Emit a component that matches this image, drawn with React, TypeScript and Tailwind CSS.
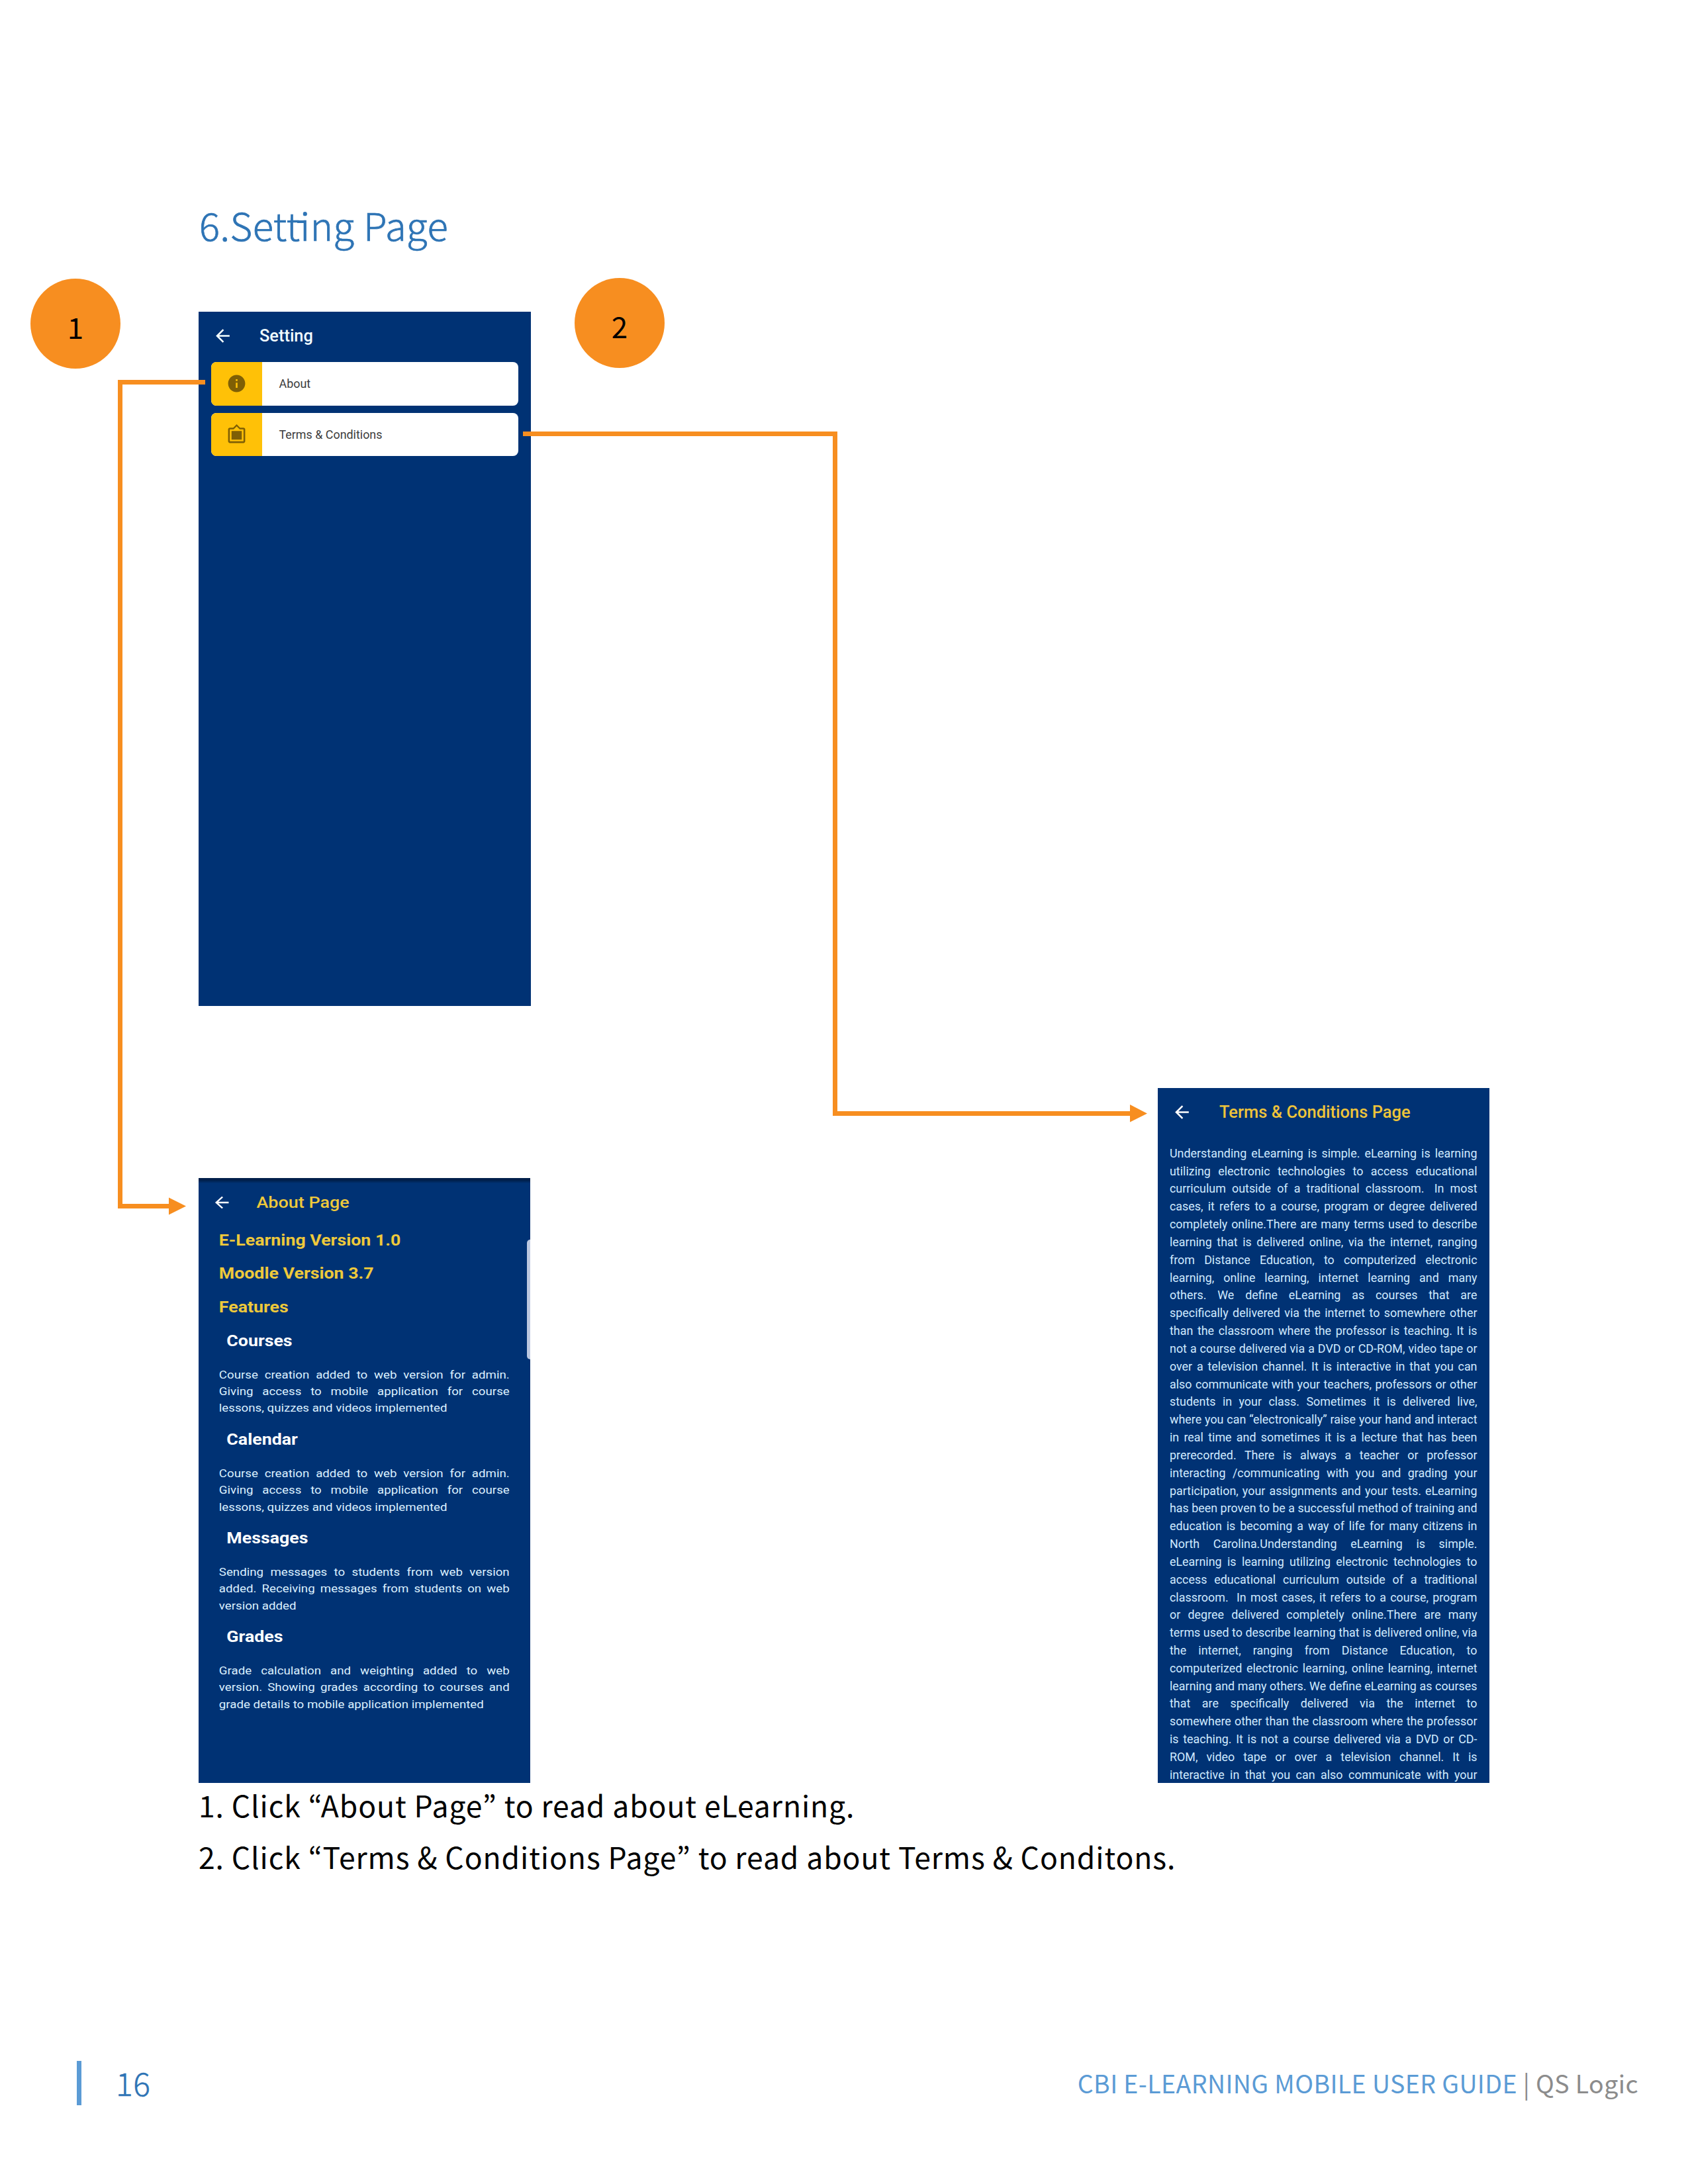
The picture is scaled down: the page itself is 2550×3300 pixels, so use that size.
import { MdArrowBack, MdFilterFrames, MdInfo } from "react-icons/md";

const TERMS_LINES = [
  "Understanding eLearning is simple. eLearning is learning",
  "utilizing electronic technologies to access educational",
  "curriculum outside of a traditional classroom.\u2004 In most",
  "cases, it refers to a course, program or degree delivered",
  "completely online.There are many terms used to describe",
  "learning that is delivered online, via the internet, ranging",
  "from Distance Education, to computerized electronic",
  "learning, online learning, internet learning and many",
  "others. We define eLearning as courses that are",
  "specifically delivered via the internet to somewhere other",
  "than the classroom where the professor is teaching. It is",
  "not a course delivered via a DVD or CD-ROM, video tape or",
  "over a television channel. It is interactive in that you can",
  "also communicate with your teachers, professors or other",
  "students in your class. Sometimes it is delivered live,",
  "where you can “electronically” raise your hand and interact",
  "in real time and sometimes it is a lecture that has been",
  "prerecorded. There is always a teacher or professor",
  "interacting /communicating with you and grading your",
  "participation, your assignments and your tests. eLearning",
  "has been proven to be a successful method of training and",
  "education is becoming a way of life for many citizens in",
  "North Carolina.Understanding eLearning is simple.",
  "eLearning is learning utilizing electronic technologies to",
  "access educational curriculum outside of a traditional",
  "classroom.\u2004 In most cases, it refers to a course, program",
  "or degree delivered completely online.There are many",
  "terms used to describe learning that is delivered online, via",
  "the internet, ranging from Distance Education, to",
  "computerized electronic learning, online learning, internet",
  "learning and many others. We define eLearning as courses",
  "that are specifically delivered via the internet to",
  "somewhere other than the classroom where the professor",
  "is teaching. It is not a course delivered via a DVD or CD-",
  "ROM, video tape or over a television channel. It is",
  "interactive in that you can also communicate with your",
];

const FEATURES = [
  {
    title: "Courses",
    lines: [
      "Course creation added to web version for admin.",
      "Giving access to mobile application for course",
      "lessons, quizzes and videos implemented",
    ],
  },
  {
    title: "Calendar",
    lines: [
      "Course creation added to web version for admin.",
      "Giving access to mobile application for course",
      "lessons, quizzes and videos implemented",
    ],
  },
  {
    title: "Messages",
    lines: [
      "Sending messages to students from web version",
      "added. Receiving messages from students on web",
      "version added",
    ],
  },
  {
    title: "Grades",
    lines: [
      "Grade calculation and weighting added to web",
      "version. Showing grades according to courses and",
      "grade details to mobile application implemented",
    ],
  },
];

function SettingRow({ icon, label }: { icon: React.ReactNode; label: string }) {
  return (
    <div className="flex h-[65.5px] overflow-hidden rounded-[8px] bg-white">
      <div className="flex w-[77px] items-center justify-center bg-[#ffc107] text-[#7f5f05]">{icon}</div>
      <div className="flex items-center pl-[26px] pt-[2px] text-[17.9px] text-[#3c3c3c]">{label}</div>
    </div>
  );
}

function SettingScreen() {
  return (
    <section className="h-[1049px] w-[502px] bg-[#003274]">
      <header className="flex h-[76px] items-center pb-[4px] pl-[21px]">
        <MdArrowBack className="size-[31px] text-[#f4ffff]" />
        <h2 className="pl-[40px] text-[25.4px] font-medium text-[#f0fbff]">Setting</h2>
      </header>
      <div className="flex flex-col gap-[11px] pl-[18.5px] pr-[19px]">
        <SettingRow icon={<MdInfo className="size-[31px]" />} label="About" />
        <SettingRow icon={<MdFilterFrames className="size-[31px]" />} label="Terms & Conditions" />
      </div>
    </section>
  );
}

function AboutScreen() {
  return (
    <section className="relative h-[914px] w-[501px] overflow-hidden bg-[#003274]">
      <div className="absolute inset-x-0 top-0 h-[8px] bg-linear-to-b from-[#001f4a] from-40% to-[#003274]" />
      <div className="absolute right-0 top-[93px] h-[181px] w-[5px] rounded-l-[5px] bg-[#bcc8e0]" />
      <div className="w-[455px] origin-left scale-x-110">
        <header className="flex h-[68.6px] items-center pl-[17.5px] pt-[6px]">
          <MdArrowBack className="size-[28px] text-white" />
          <h2 className="pl-[34px] text-[24.5px] font-medium text-[#eec93b]">About Page</h2>
        </header>
        <div className="pl-[28px] text-[24.3px] font-bold leading-[50.8px] text-[#eec93b]">
          <p>E-Learning Version 1.0</p>
          <p>Moodle Version 3.7</p>
          <p>Features</p>
        </div>
        <div className="flex flex-col gap-[9.3px] pl-[28px] pr-[28px]">
          {FEATURES.map((feature) => (
            <div key={feature.title}>
              <h3 className="pl-[10.5px] text-[24.3px] font-bold leading-[50.8px] text-white">{feature.title}</h3>
              <div className="pt-[12.8px] text-[17px] leading-[25.4px] text-[#dcf0ff]">
                {feature.lines.map((line, i) => (
                  <p key={i} className={i < 2 ? "whitespace-nowrap [text-align-last:justify]" : "whitespace-nowrap"}>
                    {line}
                  </p>
                ))}
              </div>
            </div>
          ))}
        </div>
      </div>
    </section>
  );
}

function TermsScreen() {
  return (
    <section className="h-[1050px] w-[501px] overflow-hidden bg-[#003274]">
      <header className="flex h-[85.8px] items-center pb-[13.8px] pl-[21px]">
        <MdArrowBack className="size-[31px] text-white" />
        <h2 className="pl-[41px] text-[25.5px] font-medium text-[#eec43a]">Terms &amp; Conditions Page</h2>
      </header>
      <div className="pl-[18px] pr-[18.5px] text-[17.9px] leading-[26.83px] text-[#d0eaff]">
        {TERMS_LINES.map((line, i) => (
          <p key={i} className="whitespace-nowrap [text-align-last:justify]">
            {line}
          </p>
        ))}
      </div>
    </section>
  );
}

function Connectors() {
  return (
    <svg className="pointer-events-none absolute left-0 top-0" width="2550" height="3300" viewBox="0 0 2550 3300">
      <g fill="none" stroke="#f78e20" strokeWidth="7">
        <path d="M310 577.5H181.500V1822.500H256" />
        <path d="M790 655.500H1261.500V1682.500H1708" />
      </g>
      <g fill="#f78e20">
        <path d="M255 1809.500L281 1822.500L255 1835.500Z" />
        <path d="M1707 1669L1733 1682.500L1707 1695.500Z" />
      </g>
    </svg>
  );
}

export default function App() {
  return (
    <div className="relative h-[3300px] w-[2550px] overflow-hidden bg-white font-['Noto_Sans_CJK_KR',sans-serif]">
      <div className="pl-[300px] pr-[300px] pt-[289px]">
        <h1 className="h-[182px] pl-px text-[58px] font-light leading-[100px] tracking-[0.5px] text-[#2e74b5] [-webkit-text-stroke:0.7px_#2e74b5]">
          6.Sett
          <span className="relative">
            i
            <span className="absolute left-[-4px] top-[36px] h-[4px] w-[11px] bg-[#2e74b5]" />
          </span>
          ng Page
        </h1>
        <div className="flex h-[2223px] items-end justify-between font-[Roboto,sans-serif]">
          <div className="flex h-full flex-col justify-between">
            <SettingScreen />
            <AboutScreen />
          </div>
          <TermsScreen />
        </div>
        <div className="flex flex-col gap-[13px] whitespace-nowrap text-[44.5px] leading-[65px] tracking-[0.9px] text-black">
          <p>1. Click “About Page” to read about eLearning.</p>
          <p>2. Click “Terms &amp; Conditions Page” to read about Terms &amp; Conditons.</p>
        </div>
      </div>

      <footer className="mt-[277px] flex h-[67px] items-center justify-between pl-[116px] pr-[75px]">
        <div className="flex h-full items-center gap-[52px]">
          <div className="h-full w-[7px] bg-[#5b9bd5]" />
          <span className="pb-[3px] text-[48px] font-light leading-[64px] tracking-[0.5px] text-[#2e74b5] [-webkit-text-stroke:0.5px_#2e74b5]">
            16
          </span>
        </div>
        <div className="pb-[2px] text-[37.500px] leading-[64px] tracking-[0.4px] text-[#8c8c8c]">
          <span className="text-[#5b9bd5]">CBI E-LEARNING MOBILE USER GUIDE</span> | QS Logic
        </div>
      </footer>

      <Connectors />
      <div className="absolute left-[46px] top-[421px] flex size-[136px] items-center justify-center rounded-full bg-[#f78e20] pt-[7px] text-[44px] leading-none text-black">
        1
      </div>
      <div className="absolute left-[868px] top-[420px] flex size-[136px] items-center justify-center rounded-full bg-[#f78e20] pt-[7px] text-[44px] leading-none text-black">
        2
      </div>
    </div>
  );
}
